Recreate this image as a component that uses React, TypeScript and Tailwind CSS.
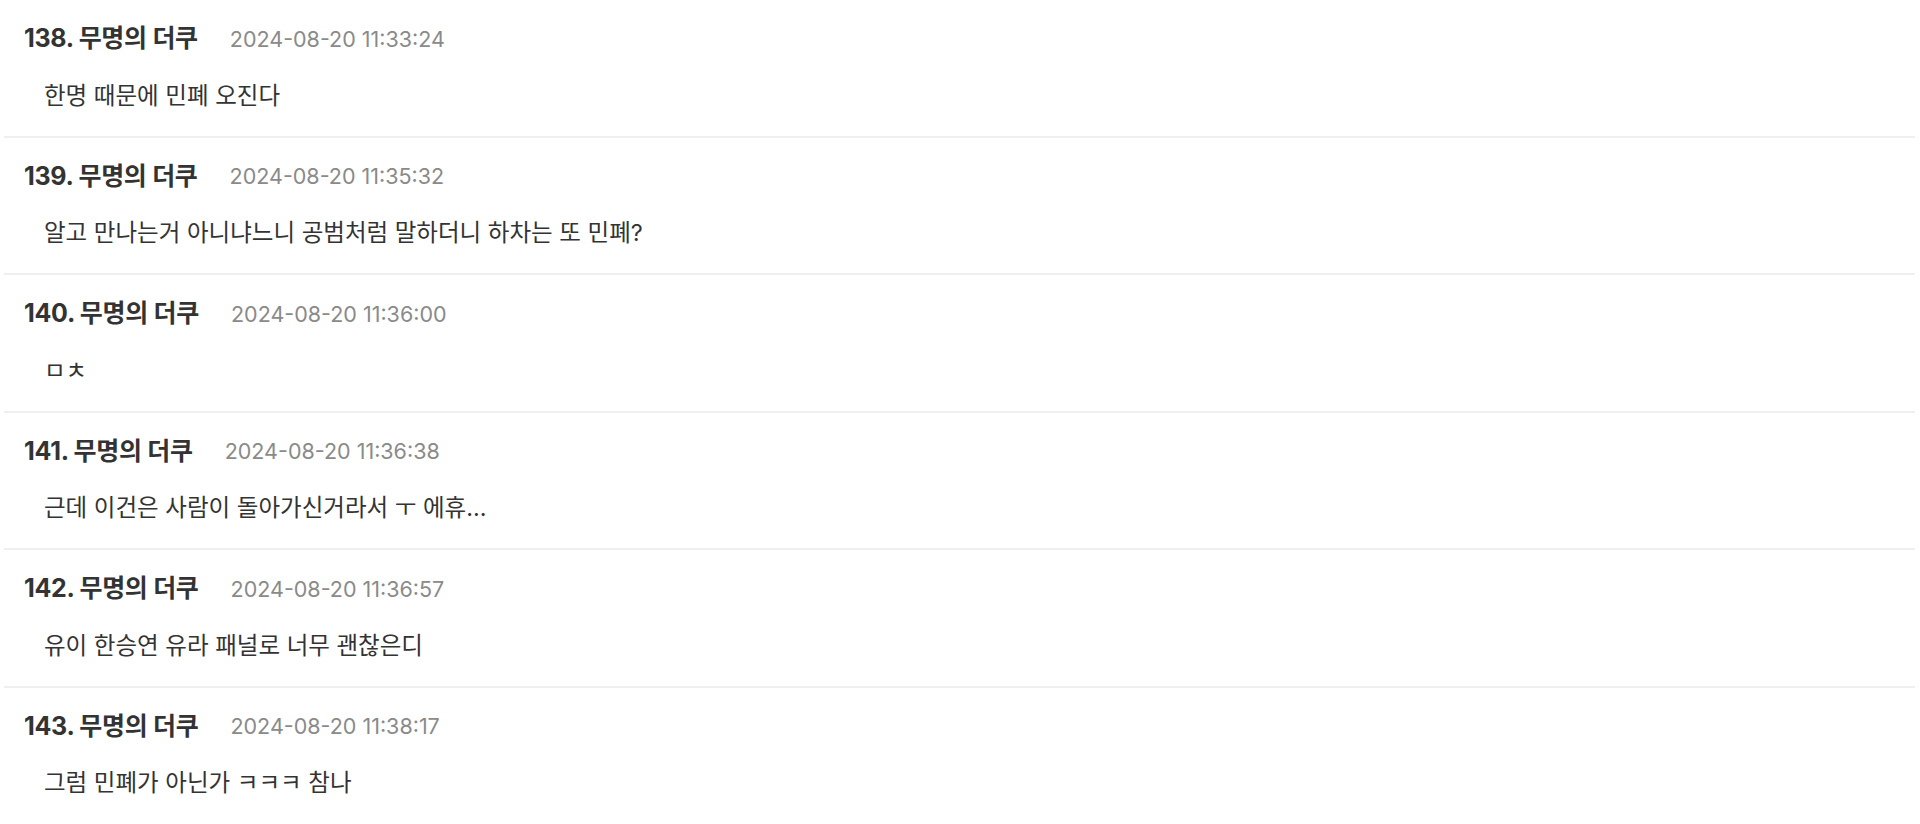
type Comment = {
  no: number;
  name: string;
  date: string;
  body: string;
};

const comments: Comment[] = [
  { no: 138, name: "무명의 더쿠", date: "2024-08-20 11:33:24", body: "한명 때문에 민폐 오진다" },
  { no: 139, name: "무명의 더쿠", date: "2024-08-20 11:35:32", body: "알고 만나는거 아니냐느니 공범처럼 말하더니 하차는 또 민폐?" },
  { no: 140, name: "무명의 더쿠", date: "2024-08-20 11:36:00", body: "ㅁㅊ" },
  { no: 141, name: "무명의 더쿠", date: "2024-08-20 11:36:38", body: "근데 이건은 사람이 돌아가신거라서 ㅜ 에휴..." },
  { no: 142, name: "무명의 더쿠", date: "2024-08-20 11:36:57", body: "유이 한승연 유라 패널로 너무 괜찮은디" },
  { no: 143, name: "무명의 더쿠", date: "2024-08-20 11:38:17", body: "그럼 민폐가 아닌가 ㅋㅋㅋ 참나" },
];

function CommentRow({ comment }: { comment: Comment }) {
  return (
    <li className="border-b-2 border-[#efefef] pt-[24px] pb-[25px] pl-[20px] last:border-b-0">
      <div className="flex h-[30px] items-center">
        <span className="text-[25px] font-bold tracking-[-0.3px] text-[#333333]">
          {comment.no}. {comment.name}
        </span>
        <span className="ml-[32px] text-[21.5px] text-[#8a8a8a]">{comment.date}</span>
      </div>
      <p className="mt-[26.5px] flex h-[30px] items-center pl-[20px] text-[23.5px] text-[#333333]">
        {comment.body}
      </p>
    </li>
  );
}

export default function App() {
  return (
    <div
      className="h-[824px] overflow-hidden bg-white pl-[4px] pr-[5px]"
      style={{ fontFamily: 'Inter, "Noto Sans CJK KR", sans-serif' }}
    >
      <ul>
        {comments.map((c) => (
          <CommentRow key={c.no} comment={c} />
        ))}
      </ul>
    </div>
  );
}
